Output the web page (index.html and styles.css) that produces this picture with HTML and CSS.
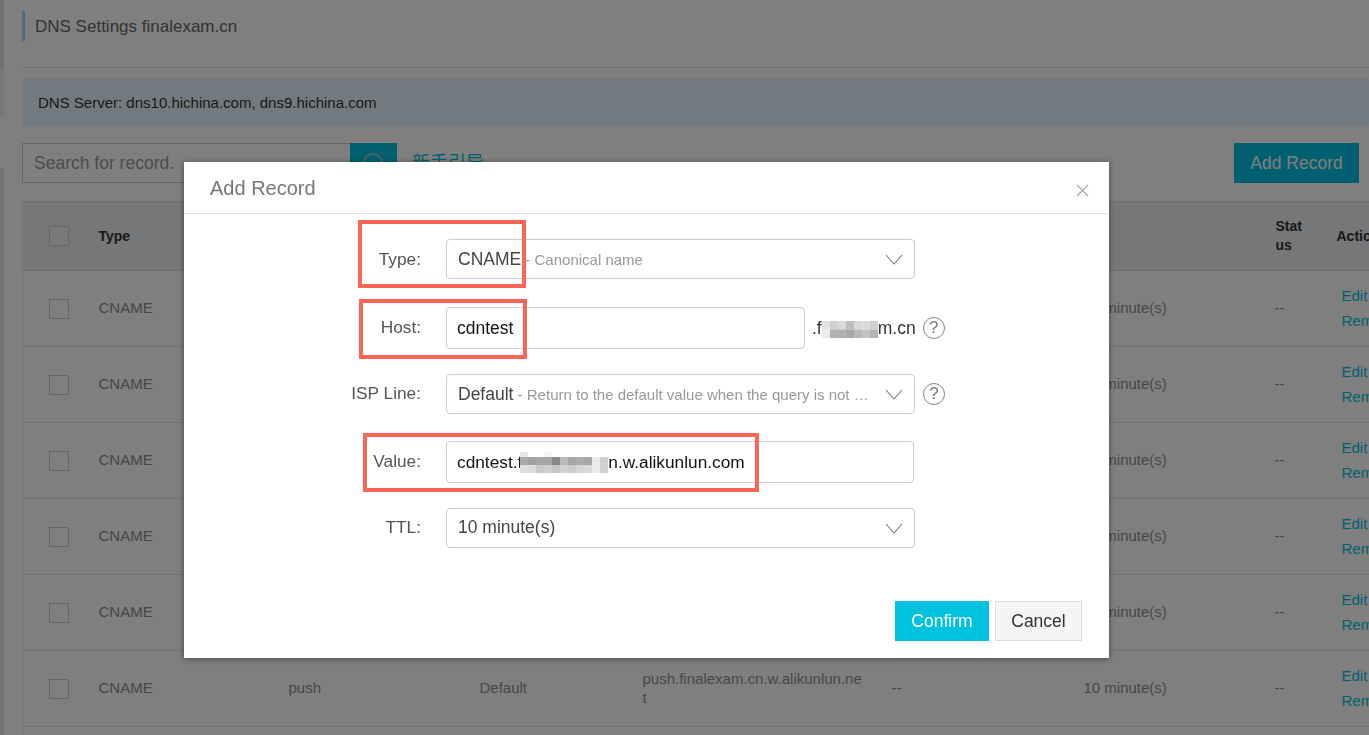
FILE: index.html
```html
<!DOCTYPE html>
<html lang="en">
<head>
<meta charset="utf-8">
<title>DNS Settings finalexam.cn</title>
<link rel="stylesheet" href="styles.css">
</head>
<body>
<div class="app">
  <aside class="rail"><div class="rail-a"></div><div class="rail-b"></div><div class="rail-gap"></div><div class="rail-c"></div></aside>
  <main class="main">
    <header class="page-head"><h1 class="page-title">DNS Settings finalexam.cn</h1></header>
    <div class="notice">DNS Server: dns10.hichina.com, dns9.hichina.com</div>
    <div class="toolbar">
      <div class="search">
        <div class="search-input">Search for record.</div>
        <button class="search-btn" type="button">
          <svg width="24" height="24" viewBox="0 0 24 24" fill="none" stroke="#a9bcc0" stroke-width="2"><circle cx="11" cy="11" r="9"/><path d="M18 18l5 5"/></svg>
        </button>
      </div>
      <a class="guide">新手引导</a>
      <button class="add-btn" type="button">Add Record</button>
    </div>
    <table class="records">
      <colgroup><col class="c-chk"><col class="c-type"><col class="c-host"><col class="c-isp"><col class="c-val"><col class="c-mx"><col class="c-ttl"><col class="c-st"><col class="c-act"></colgroup>
      <thead>
        <tr><th class="chk"><span class="box"></span></th><th>Type</th><th>Host</th><th>ISP Line</th><th>Value</th><th>MX</th><th>TTL</th><th class="st"><span class="st-text">Status</span></th><th class="act-h">Actions</th></tr>
      </thead>
      <tbody>
        <tr><td class="chk"><span class="box"></span></td><td>CNAME</td><td>cdn</td><td>Default</td><td class="val">cdn.finalexam.cn.w.alikunlun.net</td><td>--</td><td>10 minute(s)</td><td>--</td><td class="act"><a>Edit</a><a>Remove</a></td></tr>
        <tr><td class="chk"><span class="box"></span></td><td>CNAME</td><td>img</td><td>Default</td><td class="val">img.finalexam.cn.w.alikunlun.net</td><td>--</td><td>10 minute(s)</td><td>--</td><td class="act"><a>Edit</a><a>Remove</a></td></tr>
        <tr><td class="chk"><span class="box"></span></td><td>CNAME</td><td>live</td><td>Default</td><td class="val">live.finalexam.cn.w.alikunlun.net</td><td>--</td><td>10 minute(s)</td><td>--</td><td class="act"><a>Edit</a><a>Remove</a></td></tr>
        <tr><td class="chk"><span class="box"></span></td><td>CNAME</td><td>play</td><td>Default</td><td class="val">play.finalexam.cn.w.alikunlun.net</td><td>--</td><td>10 minute(s)</td><td>--</td><td class="act"><a>Edit</a><a>Remove</a></td></tr>
        <tr><td class="chk"><span class="box"></span></td><td>CNAME</td><td>pull</td><td>Default</td><td class="val">pull.finalexam.cn.w.alikunlun.net</td><td>--</td><td>10 minute(s)</td><td>--</td><td class="act"><a>Edit</a><a>Remove</a></td></tr>
        <tr><td class="chk"><span class="box"></span></td><td>CNAME</td><td>push</td><td>Default</td><td class="val">push.finalexam.cn.w.alikunlun.net</td><td>--</td><td>10 minute(s)</td><td>--</td><td class="act"><a>Edit</a><a>Remove</a></td></tr>
        <tr><td class="chk"></td><td></td><td></td><td></td><td></td><td></td><td></td><td></td><td></td></tr>
      </tbody>
    </table>
  </main>
</div>

<div class="overlay"></div>

<section class="modal">
  <header class="modal-head">
    <h2 class="modal-title">Add Record</h2>
    <svg class="modal-close" width="13" height="13" viewBox="0 0 13 13" fill="none" stroke="#a8a8a8" stroke-width="1.2"><path d="M1 1l11 11M12 1L1 12"/></svg>
  </header>
  <div class="form">
    <div class="field field-first">
      <label class="label">Type:</label>
      <div class="select">
        <span class="opt"><span class="opt-main">CNAME</span><span class="opt-note"> - Canonical name</span></span>
        <svg class="chev" width="18" height="11" viewBox="0 0 18 11" fill="none" stroke="#777" stroke-width="1.1"><path d="M1 1l8 9 8-9"/></svg>
      </div>
    </div>
    <div class="field">
      <label class="label">Host:</label>
      <div class="input input-host">cdntest</div>
      <span class="suffix">.f<svg class="mosaic" width="56" height="17" viewBox="0 0 56 17"><rect width="8" height="8.5" fill="#e2e2e2"/><rect x="8" width="8" height="8.5" fill="#cfcfcf"/><rect x="16" width="8" height="8.5" fill="#dadada"/><rect x="24" width="8" height="8.5" fill="#bdbdbd"/><rect x="32" width="8" height="8.5" fill="#d8d8d8"/><rect x="40" width="8" height="8.5" fill="#dcdcdc"/><rect x="48" width="8" height="8.5" fill="#cfcfcf"/><rect y="8.5" width="8" height="8.5" fill="#ececec"/><rect x="8" y="8.5" width="8" height="8.5" fill="#b2b2b2"/><rect x="16" y="8.5" width="8" height="8.5" fill="#b2b2b2"/><rect x="24" y="8.5" width="8" height="8.5" fill="#a9a9a9"/><rect x="32" y="8.5" width="8" height="8.5" fill="#b8b8b8"/><rect x="40" y="8.5" width="8" height="8.5" fill="#c4c4c4"/><rect x="48" y="8.5" width="8" height="8.5" fill="#b4b4b4"/></svg>m.cn</span>
      <span class="help">?</span>
    </div>
    <div class="field field-sel">
      <label class="label">ISP Line:</label>
      <div class="select">
        <span class="opt"><span class="opt-main">Default</span><span class="opt-note"> - Return to the default value when the query is not matched with any line</span></span>
        <svg class="chev" width="18" height="11" viewBox="0 0 18 11" fill="none" stroke="#777" stroke-width="1.1"><path d="M1 1l8 9 8-9"/></svg>
      </div>
      <span class="help help-sel">?</span>
    </div>
    <div class="field">
      <label class="label">Value:</label>
      <div class="input input-value">cdntest.f<svg class="mosaic mosaic-value" width="88" height="21" viewBox="0 0 88 21"><rect width="8" height="5" fill="#e6e6e6"/><rect x="24" width="8" height="5" fill="#f5f5f5"/><g><rect y="5" width="8" height="8" fill="#a9a9a9"/><rect x="8" y="5" width="8" height="8" fill="#a2a2a2"/><rect x="16" y="5" width="8" height="8" fill="#a8a8a8"/><rect x="24" y="5" width="8" height="8" fill="#a6a6a6"/><rect x="32" y="5" width="8" height="8" fill="#8a8a8a"/><rect x="40" y="5" width="8" height="8" fill="#b9b9b9"/><rect x="48" y="5" width="8" height="8" fill="#a6a6a6"/><rect x="56" y="5" width="8" height="8" fill="#acacac"/><rect x="64" y="5" width="8" height="8" fill="#a6a6a6"/><rect x="72" y="5" width="8" height="8" fill="#ebebeb"/><rect x="80" y="5" width="8" height="8" fill="#d0d0d0"/></g><g><rect y="13" width="8" height="8" fill="#dedede"/><rect x="8" y="13" width="8" height="8" fill="#dcdcdc"/><rect x="16" y="13" width="8" height="8" fill="#c9c9c9"/><rect x="24" y="13" width="8" height="8" fill="#cecece"/><rect x="32" y="13" width="8" height="8" fill="#c6c6c6"/><rect x="40" y="13" width="8" height="8" fill="#d2d2d2"/><rect x="48" y="13" width="8" height="8" fill="#cdcdcd"/><rect x="56" y="13" width="8" height="8" fill="#d6d6d6"/><rect x="64" y="13" width="8" height="8" fill="#d9d9d9"/><rect x="72" y="13" width="8" height="8" fill="#ebebeb"/><rect x="80" y="13" width="8" height="8" fill="#d0d0d0"/></g></svg>n.w.alikunlun.com</div>
    </div>
    <div class="field">
      <label class="label">TTL:</label>
      <div class="select">
        <span class="opt opt-up"><span class="opt-ttl">10 minute(s)</span></span>
        <svg class="chev" width="18" height="11" viewBox="0 0 18 11" fill="none" stroke="#777" stroke-width="1.1"><path d="M1 1l8 9 8-9"/></svg>
      </div>
    </div>
  </div>
  <footer class="modal-foot">
    <button class="btn btn-primary" type="button">Confirm</button>
    <button class="btn btn-default" type="button">Cancel</button>
  </footer>
  <div class="mark mark-type"></div>
  <div class="mark mark-host"></div>
  <div class="mark mark-value"></div>
</section>
</body>
</html>
```
FILE: styles.css
```css
* { box-sizing: border-box; }
html, body { margin: 0; height: 100%; overflow: hidden; }
body { font-family: "Liberation Sans", Arial, "Noto Sans CJK SC", sans-serif; background: #fff; color: #333; }

.app { display: flex; height: 735px; overflow: hidden; }
.rail { width: 4px; flex: none; display: flex; flex-direction: column; }
.rail-a { height: 68px; background: #dfe4e9; }
.rail-b { height: 50px; background: #eef1f3; }
.rail-gap { height: 50px; background: #fff; }
.rail-c { flex: 1; background: #e4e8ec; }
.main { flex: 1; min-width: 0; padding-left: 18px; overflow: hidden; }

.page-head { height: 68px; padding-top: 11px; border-bottom: 1px solid #d9dce0; }
.page-title { margin: 0; height: 30px; padding-left: 10px; border-left: 3px solid #a8d0ff; font-size: 17px; font-weight: 400; line-height: 32px; color: #666; }

.notice { margin-top: 10px; height: 49px; padding-left: 16px; border-radius: 4px; background: #e6f5ff; font-size: 15px; line-height: 50px; color: #333; }

.toolbar { display: flex; align-items: flex-start; margin-top: 16px; height: 40px; padding-right: 10px; }
.search { display: flex; width: 375px; height: 40px; }
.search-input { flex: 1; border: 1px solid #ccc; border-right: 0; padding-left: 11px; font-size: 17.5px; line-height: 38px; color: #999; }
.search-btn { display: flex; align-items: flex-start; width: 47px; height: 40px; padding: 9px 0 0 12px; border: 0; background: #00c1de; }
.guide { margin: 8px 0 0 15px; font-size: 18px; line-height: 24px; color: #00c1de; }
.add-btn { margin-left: auto; width: 125px; height: 40px; border: 0; background: #00c1de; font: 17.5px "Liberation Sans", Arial, sans-serif; color: #fff; }

.records { margin-top: 18px; width: 1449px; table-layout: fixed; border-collapse: collapse; border-left: 1px solid #e8e8e8; font-size: 15px; color: #8e8e8e; }
.c-chk { width: 76px; } .c-type { width: 190px; } .c-host { width: 191px; } .c-isp { width: 163px; }
.c-val { width: 249px; } .c-mx { width: 192px; } .c-ttl { width: 191px; } .c-st { width: 67px; } .c-act { width: 130px; }
.records thead tr { height: 69px; background: #ebeef2; }
.records th { padding: 0; font-size: 14px; line-height: 19px; text-align: left; color: #333; border-top: 1px solid #e4e6ea; border-bottom: 1px solid #e0e2e6; }
.records td { height: 76px; padding: 0 0 2px; line-height: 19px; border-bottom: 1px solid #e8e8e8; }
.records .chk { padding: 0 0 0 26px; }
.box { display: block; width: 20px; height: 20px; border: 1px solid #ccc; background: #fff; }
thead .box { background: #f4f4f4; }
.records .val { padding-right: 28px; font-size: 15px; word-break: break-all; }
.st-text { display: block; width: 31px; padding-left: 1px; word-break: break-all; }
.records .act-h { padding-left: 0; transform: translateX(-5px); white-space: nowrap; }
.act a { display: block; font-size: 15px; line-height: 25px; color: #00c1de; white-space: nowrap; }

.overlay { position: fixed; inset: 0; background: rgba(0, 0, 0, .5); }

.modal { position: fixed; left: 184px; top: 162px; width: 925px; height: 496px; display: flex; flex-direction: column; background: #fff; box-shadow: 0 1px 6px rgba(0, 0, 0, .45); }
.modal-head { display: flex; align-items: center; justify-content: space-between; flex: none; height: 52px; margin-right: 2px; padding: 2px 18px 0 26px; border-bottom: 1px solid #ddd; }
.modal-title { margin: 0; font-size: 20px; font-weight: 400; color: #777; }
.modal-close { margin-top: 3px; }

.form { padding-top: 25px; }
.field { display: flex; align-items: center; margin-bottom: 25px; }
.field-first { margin-bottom: 28px; }
.field-sel { margin-bottom: 27px; }
.label { flex: none; width: 237px; margin-right: 25px; padding-bottom: 2px; text-align: right; font-size: 17.3px; line-height: 20px; color: #555; }
.field-first .label { padding-bottom: 0; }

.select { display: flex; align-items: center; width: 469px; height: 40px; padding: 0 11px; border: 1px solid #ccc; border-radius: 4px; background: #fff; }
.opt { flex: 1; min-width: 0; white-space: nowrap; overflow: hidden; text-overflow: ellipsis; padding-right: 10px; font-size: 15px; color: #999; }
.opt-up { padding-bottom: 2px; }
.opt-main, .opt-ttl { font-size: 17.5px; color: #444; }
.chev { flex: none; }

.input { height: 42px; padding-left: 10px; border: 1px solid #ccc; border-radius: 4px; font-size: 17.5px; line-height: 40px; color: #111; white-space: nowrap; }
.input-host { width: 359px; }
.input-value { width: 468px; font-size: 17.3px; }
.suffix { margin-left: 7px; font-size: 17.5px; color: #333; white-space: nowrap; }
.mosaic { vertical-align: -4px; }
.mosaic-value { vertical-align: -5px; margin-left: -2px; }
.help { flex: none; display: block; width: 22px; height: 22px; margin-left: 7px; border: 1.5px solid #888; border-radius: 50%; font-size: 17px; line-height: 19px; text-align: center; color: #777; }
.help-sel { margin-left: 8px; }

.modal-foot { display: flex; justify-content: flex-end; gap: 6px; margin-top: auto; padding: 0 27px 17px 0; }
.btn { height: 40px; font: 17.5px "Liberation Sans", Arial, sans-serif; }
.btn-primary { width: 94px; border: 0; background: #00c1de; color: #fff; }
.btn-default { width: 87px; border: 1px solid #ddd; background: #f5f5f5; color: #333; }

.mark { position: absolute; border: 4px solid #fd6555; pointer-events: none; }
.mark-type { left: 174px; top: 58px; width: 168px; height: 68px; }
.mark-host { left: 175px; top: 137px; width: 168px; height: 60px; }
.mark-value { left: 179px; top: 271px; width: 396px; height: 59px; }
```
